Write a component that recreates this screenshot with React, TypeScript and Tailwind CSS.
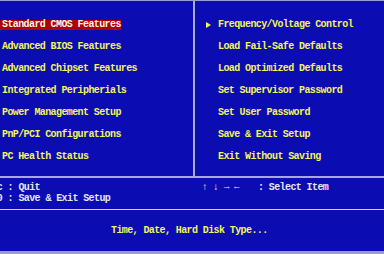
import React from 'react';

const leftItems = [
  'Standard CMOS Features',
  'Advanced BIOS Features',
  'Advanced Chipset Features',
  'Integrated Peripherials',
  'Power Management Setup',
  'PnP/PCI Configurations',
  'PC Health Status',
];

const rightItems = [
  'Frequency/Voltage Control',
  'Load Fail-Safe Defaults',
  'Load Optimized Defaults',
  'Set Supervisor Password',
  'Set User Password',
  'Save & Exit Setup',
  'Exit Without Saving',
];

const font = { fontFamily: '"Liberation Mono", "DejaVu Sans Mono", monospace' };

export default function App() {
  return (
    <div
      className="w-[384px] h-[254px] bg-[#0b0db2] overflow-hidden flex flex-col text-[10px] font-bold tracking-[-0.6px] leading-[10px]"
      style={font}
    >
      <div className="h-[1px] bg-[#9c9cd4]" />

      {/* menu columns */}
      <div className="flex h-[175px]">
        <div className="w-[193px] pt-[13px] flex flex-col">
          {leftItems.map((item, i) => (
            <div key={item} className="h-[22px] flex items-center">
              {i === 0 ? (
                <span className="h-[10px] pl-[2px] bg-[#b00000] text-[#f4f4f4] whitespace-pre">{item}</span>
              ) : (
                <span className="pl-[2px] text-[#f4f45c] whitespace-pre">{item}</span>
              )}
            </div>
          ))}
        </div>
        <div className="w-[2px] bg-[#a8a8d8]" />
        <div className="flex-1 pt-[13px] flex flex-col">
          {rightItems.map((item, i) => (
            <div key={item} className="h-[22px] flex items-center">
              <span className="w-[23px] flex justify-end pr-[7px]">
                {i === 0 && (
                  <svg width="5" height="6" viewBox="0 0 5 6">
                    <path d="M0 0 L5 3 L0 6 Z" fill="#f4f45c" />
                  </svg>
                )}
              </span>
              <span className="text-[#f4f45c] whitespace-pre">{item}</span>
            </div>
          ))}
        </div>
      </div>

      <div className="h-[2px] bg-[#a8a8d8]" />

      {/* key help */}
      <div className="h-[31px] pt-[4px] flex text-[#e6e6f0]">
        <div className="w-[195px] flex flex-col">
          <div className="h-[11px] leading-[11px] ml-[-14px] whitespace-pre">Esc : Quit</div>
          <div className="h-[11px] leading-[11px] ml-[-14px] whitespace-pre">F10 : Save &amp; Exit Setup</div>
        </div>
        <div className="flex-1 flex flex-col">
          <div className="h-[11px] leading-[11px] flex items-center">
            <span className="ml-[7px] w-[11px]">↑</span>
            <span className="w-[11px]">↓</span>
            <span className="w-[10px] text-[9px]">→</span>
            <span className="w-[10px] text-[9px]">←</span>
            <span className="ml-[14px] whitespace-pre">: Select Item</span>
          </div>
        </div>
      </div>

      <div className="h-[1px] bg-[#d0d0ec]" />

      {/* item description */}
      <div className="flex-1 flex items-center pl-[111px]">
        <span className="text-[#f4f45c] whitespace-pre">Time, Date, Hard Disk Type...</span>
      </div>

      <div className="h-[3px] bg-[#9c9cc8]" />
    </div>
  );
}
